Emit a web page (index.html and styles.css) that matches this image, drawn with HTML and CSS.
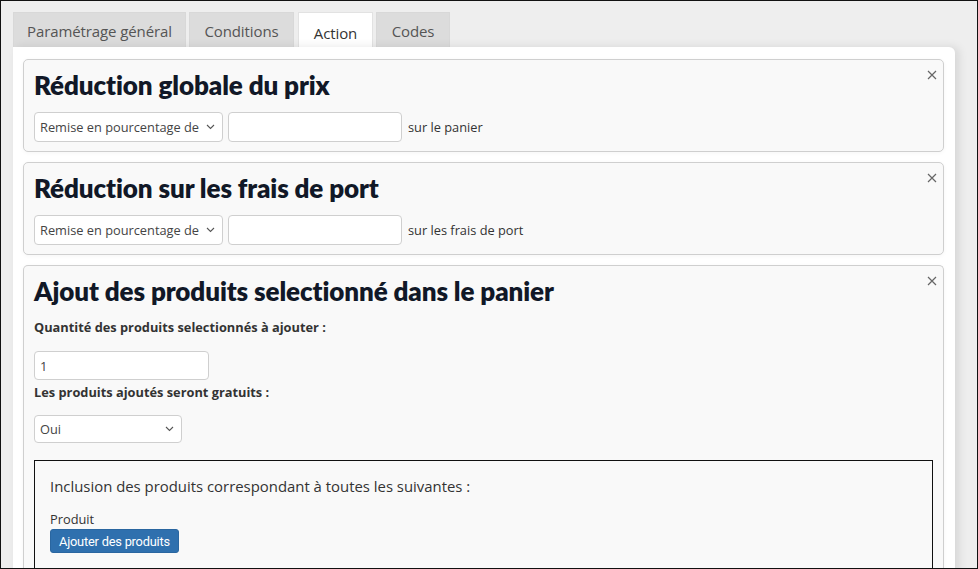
FILE: index.html
```html
<!DOCTYPE html>
<html lang="fr">
<head>
<meta charset="utf-8">
<title>Règle de panier – Action</title>
<link rel="stylesheet" href="styles.css">
</head>
<body>
<div class="frame">
  <nav class="tabs">
    <a class="tab">Paramétrage général</a>
    <a class="tab">Conditions</a>
    <a class="tab active">Action</a>
    <a class="tab">Codes</a>
  </nav>

  <section class="panel">
    <div class="card">
      <button class="close" aria-label="Supprimer">
        <svg width="10" height="10" viewBox="0 0 10 10"><path d="M1 1L9 9M9 1L1 9" stroke="#666" stroke-width="1.2" fill="none"/></svg>
      </button>
      <h2 class="card-title">Réduction globale du prix</h2>
      <div class="row">
        <div class="select wide"><span>Remise en pourcentage de</span><svg class="chev" width="9" height="6" viewBox="0 0 9 6"><path d="M1 1l3.5 3.5L8 1" stroke="#555" stroke-width="1.1" fill="none"/></svg></div>
        <div class="input amount"></div>
        <span class="suffix">sur le panier</span>
      </div>
    </div>

    <div class="card">
      <button class="close" aria-label="Supprimer">
        <svg width="10" height="10" viewBox="0 0 10 10"><path d="M1 1L9 9M9 1L1 9" stroke="#666" stroke-width="1.2" fill="none"/></svg>
      </button>
      <h2 class="card-title">Réduction sur les frais de port</h2>
      <div class="row">
        <div class="select wide"><span>Remise en pourcentage de</span><svg class="chev" width="9" height="6" viewBox="0 0 9 6"><path d="M1 1l3.5 3.5L8 1" stroke="#555" stroke-width="1.1" fill="none"/></svg></div>
        <div class="input amount"></div>
        <span class="suffix">sur les frais de port</span>
      </div>
    </div>

    <div class="card last">
      <button class="close" aria-label="Supprimer">
        <svg width="10" height="10" viewBox="0 0 10 10"><path d="M1 1L9 9M9 1L1 9" stroke="#666" stroke-width="1.2" fill="none"/></svg>
      </button>
      <h2 class="card-title">Ajout des produits selectionné dans le panier</h2>
      <label class="field-label">Quantité des produits selectionnés à ajouter :</label>
      <div class="input qty">1</div>
      <label class="field-label second">Les produits ajoutés seront gratuits :</label>
      <div class="select short"><span>Oui</span><svg class="chev" width="9" height="6" viewBox="0 0 9 6"><path d="M1 1l3.5 3.5L8 1" stroke="#555" stroke-width="1.1" fill="none"/></svg></div>

      <div class="rules">
        <p class="rules-intro">Inclusion des produits correspondant à toutes les suivantes :</p>
        <div class="rule-name">Produit</div>
        <button class="btn-primary">Ajouter des produits</button>
      </div>
    </div>
  </section>
</div>
</body>
</html>
```

FILE: styles.css
```css
* {
  box-sizing: border-box;
}

html, body {
  margin: 0;
  height: 100%;
}

body {
  font-family: "Open Sans", "Noto Sans", sans-serif;
  color: #333;
  background: #ececec;
}

.frame {
  height: 569px;
  border: 1px solid #111;
  background: #eeeeee;
  padding: 11px 22px 0 12px;
  overflow: hidden;
  display: flex;
  flex-direction: column;
}

/* tab strip */
.tabs {
  display: flex;
  gap: 3px;
  height: 35px;
  flex: none;
}

.tab {
  flex: none;
  display: flex;
  align-items: center;
  justify-content: center;
  padding: 2px 0 0;
  background: #dcdcdc;
  color: #555;
  font-size: 15px;
  font-weight: 400;
  font-family: "Open Sans", sans-serif;
  letter-spacing: -0.1px;
  white-space: nowrap;
  border: 1px solid #d8d8d8;
  border-bottom: none;
}

.tab:nth-child(1) { width: 173px; }
.tab:nth-child(2) { width: 105px; }
.tab:nth-child(3) { width: 75px; margin-left: 1px; }
.tab:nth-child(4) { width: 74px; }

.tab.active {
  background: #fff;
  color: #333;
  border-color: #e2e2e2;
  padding-top: 5px;
}

/* main panel */
.panel {
  flex: 1;
  background: #fff;
  border-radius: 0 6px 0 0;
  box-shadow: 4px 0 10px rgba(0, 0, 0, 0.10);
  padding: 12px 11px 0 10px;
  display: flex;
  flex-direction: column;
  gap: 10px;
}

.card {
  position: relative;
  background: #f9f9f9;
  border: 1px solid #cfcfcf;
  border-radius: 5px;
  padding: 9px 10px 9px 10px;
  box-shadow: 0 1px 4px rgba(0, 0, 0, 0.04);
}

.card.last {
  flex: 1;
  padding-bottom: 0;
  border-bottom: none;
  border-radius: 5px 5px 0 0;
}

.close {
  position: absolute;
  top: 9px;
  right: 5px;
  width: 12px;
  height: 12px;
  padding: 0;
  border: 0;
  background: none;
  display: flex;
  align-items: center;
  justify-content: center;
}

.card-title {
  margin: 0;
  font-family: "Lato", sans-serif;
  font-weight: 800;
  font-size: 26px;
  line-height: 32px;
  color: #111827;
  letter-spacing: -0.1px;
}

.row {
  display: flex;
  align-items: center;
  gap: 5px;
  margin-top: 10px;
}

.select,
.input {
  height: 30px;
  background: #fff;
  border: 1px solid #cfcfcf;
  border-radius: 4px;
  font-size: 12.8px;
  color: #444;
  display: flex;
  align-items: center;
  padding: 0 5px;
}

.select {
  justify-content: space-between;
  padding-right: 7px;
}

.select.wide { width: 189px; margin-top: 1px; }
.select.short { width: 148px; height: 28px; margin-top: 14px; }

.chev {
  flex: none;
}

.input.amount { width: 174px; }
.input.qty { width: 175px; height: 29px; margin-top: 15px; }

.suffix {
  font-size: 12.8px;
  color: #333;
  margin-left: 1px;
}

.field-label {
  display: block;
  margin-top: 11px;
  font-size: 12.8px;
  font-weight: 700;
  color: #333;
}

.field-label.second {
  margin-top: 3px;
}

/* product rules block */
.rules {
  margin: 17px 0 0 0;
  width: 899px;
  height: 200px;
  border: 1px solid #111;
  padding: 15px 15px;
}

.rules-intro {
  margin: 0;
  font-size: 14.9px;
  color: #333;
}

.rule-name {
  margin-top: 16px;
  font-size: 12.8px;
  line-height: 15px;
  color: #333;
}

.btn-primary {
  display: block;
  margin-top: 2px;
  height: 24px;
  padding: 0 8px;
  background: #2f70ae;
  color: #fff;
  border: 1px solid #2a66a0;
  border-radius: 3px;
  font-family: "Roboto", sans-serif;
  font-size: 12.8px;
  letter-spacing: -0.2px;
}
```
